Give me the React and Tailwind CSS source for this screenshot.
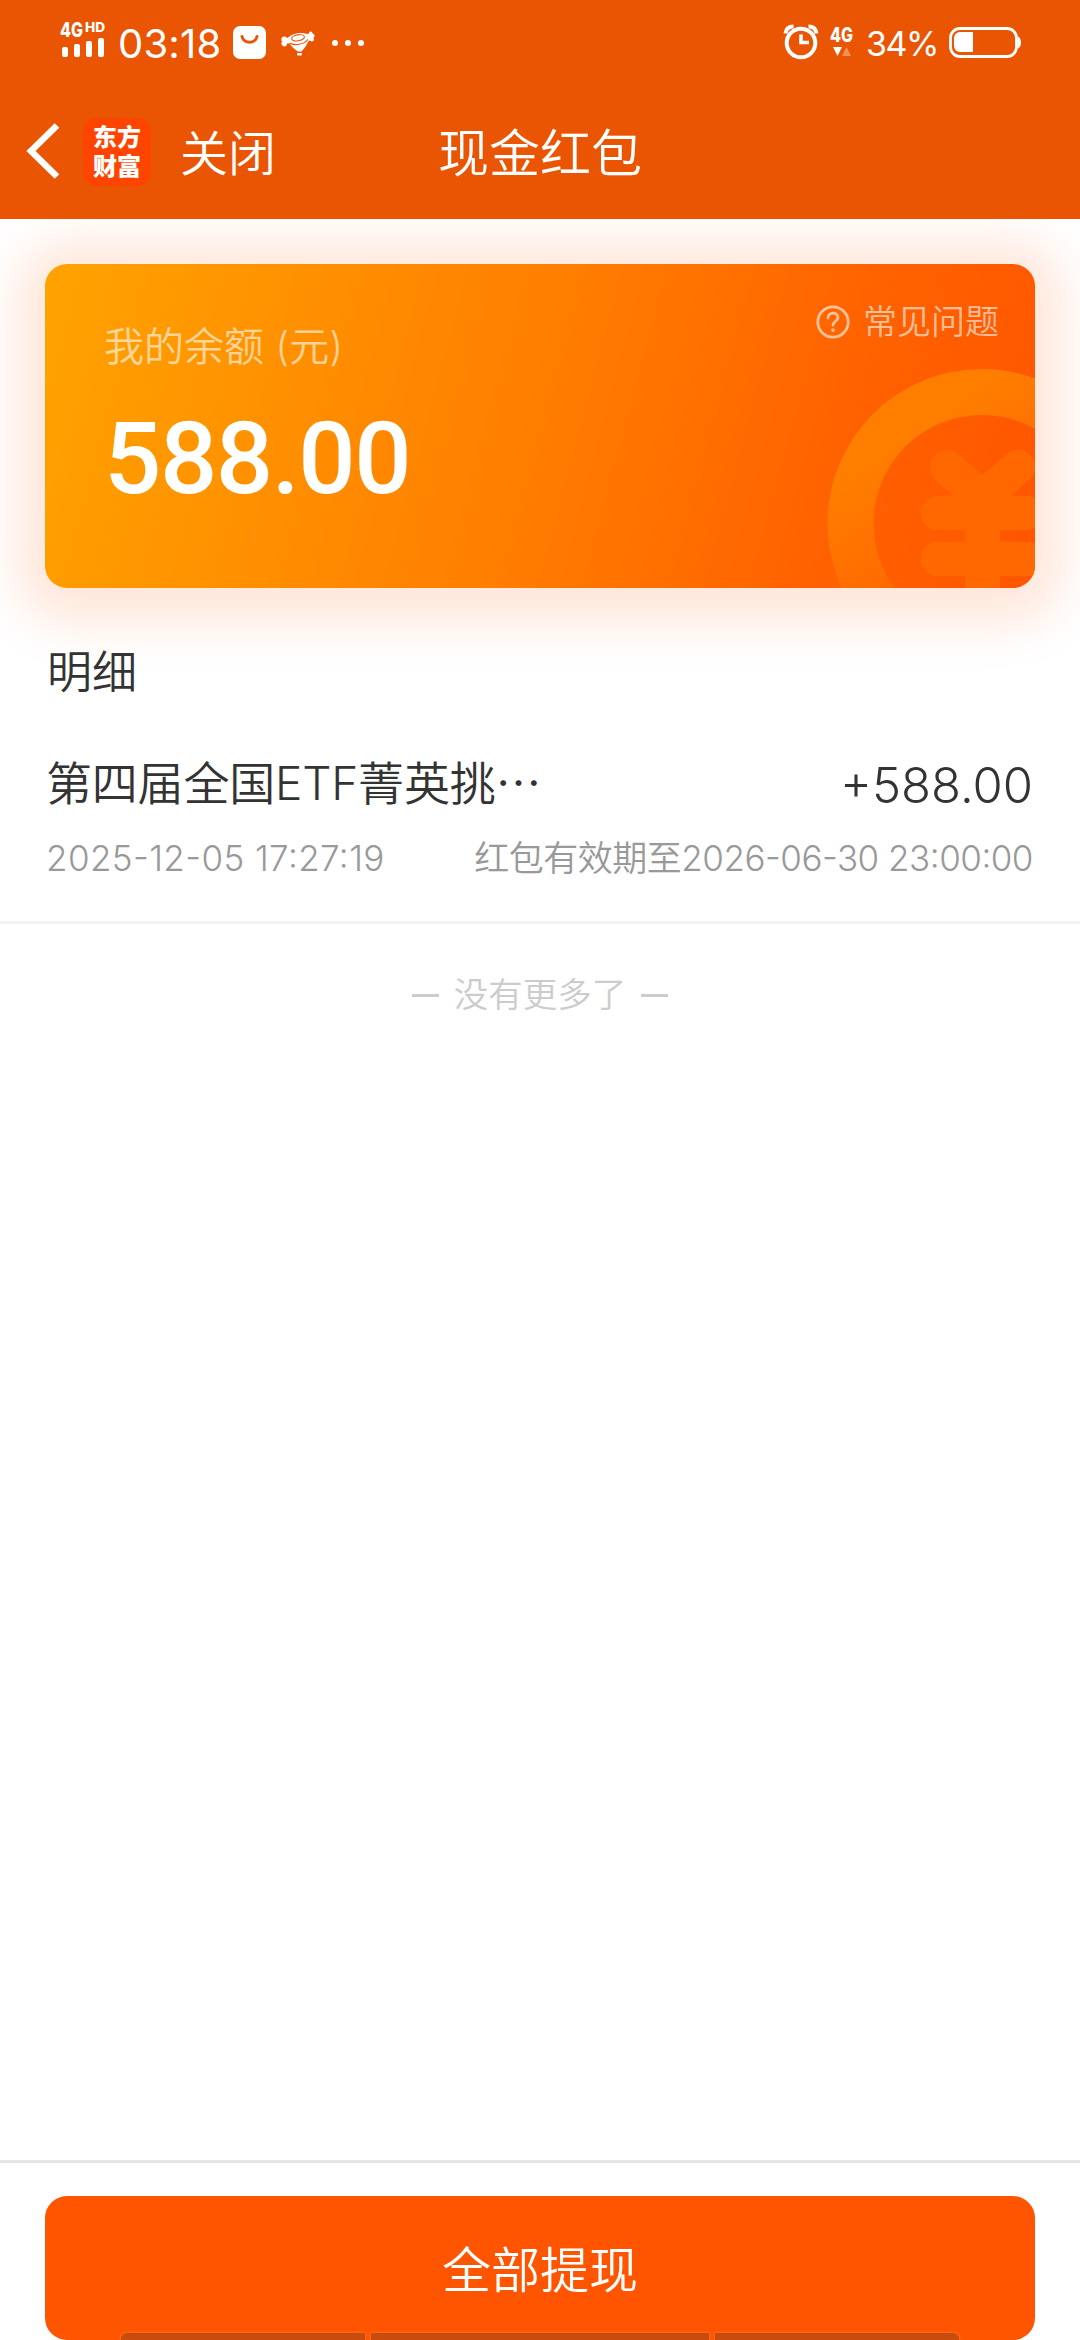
import React from 'react';

const FONT = "font-[Inter,'Noto_Sans_CJK_SC',sans-serif]";

// --- STATUS BAR ICONS ---
const SignalIcon = () => (
  <svg width="52" height="46" viewBox="0 -6 52 46" fill="white" className="shrink-0 overflow-visible">
    <text x="1" y="16" fontSize="20" fontWeight="800" textLength="23" lengthAdjust="spacingAndGlyphs">4G</text>
    <text x="26" y="11" fontSize="13" fontWeight="800" textLength="20" lengthAdjust="spacingAndGlyphs">HD</text>
    <rect x="3" y="26" width="6" height="10" rx="2" />
    <rect x="15" y="23" width="6" height="13" rx="2" />
    <rect x="27" y="20" width="6" height="16" rx="2" />
    <rect x="39" y="17" width="6" height="19" rx="2" />
  </svg>
);

const BagIcon = () => (
  <svg width="33" height="33" viewBox="0 0 33 33" className="shrink-0">
    <rect width="33" height="33" rx="7" fill="white" />
    <path d="M9 10.5C10.5 18 22.5 18 24 10.5" fill="none" stroke="#ea5504" strokeWidth="3" strokeLinecap="round" />
  </svg>
);

const BirdIcon = () => (
  <svg width="34" height="26" viewBox="0 0 34 26" className="shrink-0">
    <path d="M0.500 8C1 5 4 5 6 7L8 6C11 2.500 20 0.500 26 3L28 2.500C28 -0.500 31.500 0 31.500 2.500C34.500 3.500 33.500 6 32.500 7C34 10 31 11.500 29 9.500L27.500 10C26 14 23.500 17 20.500 20.500H17C14 18.500 11 16 9 13L6.500 12C6 15.500 3 16.500 1.500 14.500C-0.500 13 0.500 11 1.500 10.500C0.500 10 0 9 0.500 8Z" fill="white" />
    <ellipse cx="17" cy="6.800" rx="6.500" ry="3" transform="rotate(-9 17 6.800)" fill="none" stroke="#ea5504" strokeWidth="1.100" />
    <path d="M8.500 12C13 15 23 13.500 27 8.500" fill="none" stroke="#ea5504" strokeWidth="1.100" />
    <rect x="16" y="22" width="5" height="2.500" rx="1" fill="white" />
  </svg>
);

const AlarmIcon = () => (
  <svg width="36" height="36" viewBox="0 0 36 36" fill="none" stroke="white" className="shrink-0">
    <circle cx="18" cy="19" r="14.300" strokeWidth="4" />
    <path d="M18 10.500V18.500H26" strokeWidth="3.600" />
    <path d="M2.500 9.500C3 5 6 2.500 10.500 2.500M33.500 9.500C33 5 30 2.500 25.500 2.500" strokeWidth="4" />
  </svg>
);

const DataIcon = () => (
  <svg width="28" height="40" viewBox="0 -6 28 40" fill="white" className="shrink-0 overflow-visible">
    <text x="1" y="16" fontSize="20" fontWeight="800" textLength="23" lengthAdjust="spacingAndGlyphs">4G</text>
    <path d="M4 21H13L8.500 30Z" />
    <path d="M13 30H22L17.500 21Z" fillOpacity="0.35" />
  </svg>
);

const BatteryIcon = () => (
  <svg width="73" height="31" viewBox="0 0 73 31" className="shrink-0">
    <rect x="1.500" y="1.500" width="66" height="28" rx="9.500" fill="none" stroke="white" strokeWidth="2.800" />
    <path d="M24 5H11A6 6 0 0 0 5 11V19A6 6 0 0 0 11 25H24Z" fill="white" />
    <path d="M69 9.500C73 11 73 20 69 21.500Z" fill="white" />
  </svg>
);

const StatusBar = () => (
  <div className="flex h-[84px] items-start pr-[58px] pl-[59px] text-white">
    <div className="mt-[15px] w-[59px]"><SignalIcon /></div>
    <span className="mt-[20px] w-[115px] text-[40px] leading-[48px] tracking-[0.2px] whitespace-nowrap">03:18</span>
    <div className="mt-[26px] w-[48px]"><BagIcon /></div>
    <div className="mt-[31px] w-[51px]"><BirdIcon /></div>
    <div className="mt-[40px] flex gap-[7px]">
      <i className="size-[6px] rounded-full bg-white" />
      <i className="size-[6px] rounded-full bg-white" />
      <i className="size-[6px] rounded-full bg-white" />
    </div>
    <div className="mt-[24px] ml-auto w-[46px]"><AlarmIcon /></div>
    <div className="mt-[20px] w-[37px]"><DataIcon /></div>
    <span className="mt-[23px] w-[83px] text-[34px] leading-[42px] tracking-[-1.5px] whitespace-nowrap">34%</span>
    <div className="mt-[27px]"><BatteryIcon /></div>
  </div>
);

const NavBar = () => (
  <div className="relative flex h-[135px] items-start text-white">
    <svg width="34" height="58" viewBox="0 0 34 58" className="mt-[38px] ml-[26px] shrink-0">
      <path d="M31 3.500L5 29L31 54.500" fill="none" stroke="white" strokeWidth="6.500" />
    </svg>
    <div className="mt-[34px] ml-[23px] flex size-[68px] justify-center rounded-[14px] bg-[#ff4400] pt-[3px] font-['Noto_Sans_CJK_SC',sans-serif] text-[24px] leading-[29px] font-black">
      <span>东方<br />财富</span>
    </div>
    <span className="mt-[36px] ml-[29px] text-[48px] leading-[68px] font-[350]">关闭</span>
    <h1 className="absolute inset-x-0 top-[36px] text-center text-[51px] leading-[68px] font-[350]">现金红包</h1>
  </div>
);

// --- BALANCE CARD ---
const CoinMark = () => (
  <svg width="208" height="220" viewBox="827 368 208 220" fill="none" className="absolute right-0 bottom-0">
    <defs>
      <linearGradient id="ring" gradientUnits="userSpaceOnUse" x1="880" y1="440" x2="950" y2="540">
        <stop offset="0.1" stopColor="#ff7e00" />
        <stop offset="1" stopColor="#ff6a00" />
      </linearGradient>
    </defs>
    <circle cx="982" cy="523.500" r="131.500" stroke="url(#ring)" strokeWidth="46" />
    <path d="M947 467L982 498L1018 467M938 513H1026M938 559H1026" stroke="#ff6800" strokeWidth="34.500" strokeLinecap="round" strokeLinejoin="round" />
    <path d="M982.500 498V600" stroke="#ff6800" strokeWidth="35" />
  </svg>
);

const BalanceCard = () => (
  <section className="relative mx-[45px] mt-[45px] flex h-[324px] justify-between rounded-[22px] bg-linear-[105deg,#ffa300,#ff7f00_48%,#ff6200_78%,#ff5500] shadow-[0_6px_50px_28px_rgba(255,85,0,0.15)]">
    <div className="absolute inset-0 overflow-hidden rounded-[22px]"><CoinMark /></div>
    <div className="relative pt-[53px] pl-[59px]">
      <p className="text-[40px] leading-[60px] font-[350] text-white/60">我的余额 (元)</p>
      <p className="mt-[22px] font-[Roboto,sans-serif] text-[101px] leading-[120px] font-medium tracking-[-1.5px] text-white">588.00</p>
    </div>
    <div className="relative flex h-[34px] items-center pt-[58px] pr-[36px] text-white/60">
      <svg width="34" height="34" viewBox="0 0 34 34" fill="none" stroke="currentColor" strokeWidth="2.800" strokeLinecap="round" className="mr-[13px]">
        <circle cx="17" cy="17" r="15.200" />
        <path d="M12 13C12 6.500 22 6.500 22 12.500C22 16 17 16.500 17 20" />
        <path d="M17 25V25.200" strokeWidth="3.500" />
      </svg>
      <span className="text-[34px] leading-[34px] font-[350]">常见问题</span>
    </div>
  </section>
);

// --- RECORD LIST ---
const records = [
  {
    id: 1,
    title: '第四届全国ETF菁英挑⋯',
    amount: '+588.00',
    time: '2025-12-05 17:27:19',
    expire: '红包有效期至2026-06-30 23:00:00',
  },
];

const RecordList = () => (
  <section className="relative">
    <h2 className="mt-[51px] px-[47px] text-[45px] leading-[68px] font-[350] text-[#333]">明细</h2>
    {records.map((item) => (
      <div key={item.id} className="mt-[42px] h-[175px] border-b-[3px] border-[#f3f3f3] pr-[47px] pl-[46px]">
        <div className="flex h-[68px] justify-between leading-[68px] font-[350] text-[#333]">
          <span className="text-[46px] tracking-[-0.2px]">{item.title}</span>
          <span className="pt-[3px] text-[49px]">{item.amount}</span>
        </div>
        <div className="mt-[19px] flex justify-between text-[35px] leading-[44px] font-[350] text-[#999] [font-feature-settings:'case']">
          <span className="tracking-[0.4px]">{item.time}</span>
          <span className="tracking-[-0.5px]">{item.expire}</span>
        </div>
      </div>
    ))}
    <div className="mt-[46px] flex items-center justify-center gap-[15px] text-[34.500px] leading-[50px] font-[350] text-[#ccc]">
      <i className="h-[3px] w-[27px] bg-[#ccc]" />
      <span>没有更多了</span>
      <i className="h-[3px] w-[27px] bg-[#ccc]" />
    </div>
  </section>
);

const Footer = () => (
  <footer className="mt-auto h-[180px] border-t-[3px] border-[#e5e5e5] px-[45px] pt-[33px]">
    <button className="relative block h-[144px] w-full rounded-[22px] bg-[#ff5500] pt-[5px] text-[49px] font-[350] text-white">
      全部提现
      <span className="absolute bottom-0 left-[76px] flex h-[7px] w-[838px] gap-[6px]">
        <i className="w-[244px] rounded-tl-[6px] bg-[#c84c0d] shadow-[0_0_2px_1px_#ff6a20]" />
        <i className="w-[338px] bg-[#c84c0d] shadow-[0_0_2px_1px_#ff6a20]" />
        <i className="w-[244px] rounded-tr-[6px] bg-[#c84c0d] shadow-[0_0_2px_1px_#ff6a20]" />
      </span>
    </button>
  </footer>
);

const App = () => {
  return (
    <div className={`${FONT} flex h-[2340px] w-[1080px] flex-col overflow-hidden bg-white`}>
      <header className="relative z-10 h-[219px] shrink-0 bg-[#ea5504]">
        <StatusBar />
        <NavBar />
      </header>
      <BalanceCard />
      <RecordList />
      <Footer />
    </div>
  );
};

export default App;
